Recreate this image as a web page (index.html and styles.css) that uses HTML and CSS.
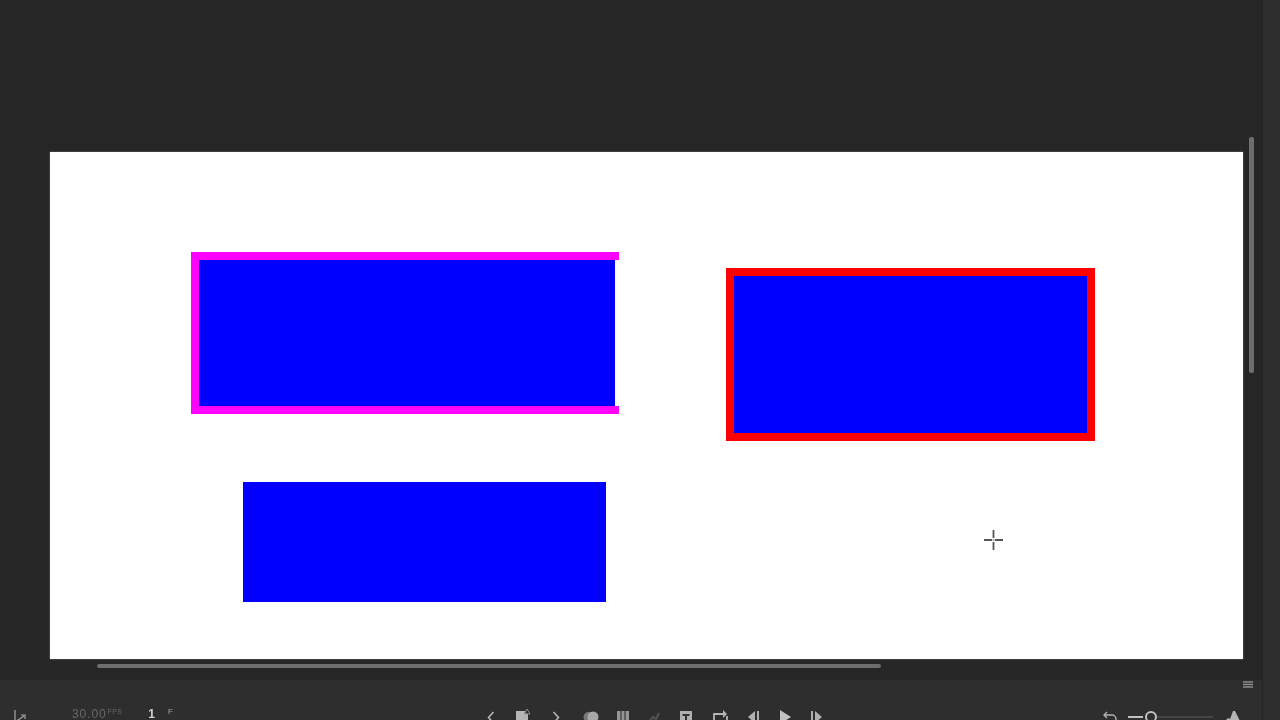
FILE: index.html
```html
<!DOCTYPE html>
<html>
<head>
    <meta charset="UTF-8">
    <title>Composition Viewer</title>
    <link rel="stylesheet" href="styles.css">
</head>
<body>
    <div class="app">
        <div class="main-column">
            <!-- Composition viewer -->
            <main class="viewer">
                <div class="artboard">
                    <div class="shape shape-magenta"><div class="shape-fill"></div></div>
                    <div class="shape shape-red"></div>
                    <div class="shape shape-blue"></div>
                    <svg class="cursor" width="19" height="20" viewBox="0 0 19 20">
                        <path d="M9.500 0v8M9.500 12v8M0 10h8M11 10h8" stroke="#555" stroke-width="1.800" fill="none"/>
                        <path d="M8.500 9h2v2h-2z" fill="#aaa"/>
                    </svg>
                </div>
                <div class="scroll-v"></div>
                <div class="scroll-h"></div>
            </main>

            <!-- Playback bar, cut off by the bottom of the window -->
            <footer class="playbar">
                <div class="menu-row">
                    <svg width="10" height="8" viewBox="0 0 10 8"><path d="M0 1h10M0 3.500h10M0 6h10" stroke="#8a8a8a" stroke-width="1.300"/></svg>
                </div>
                <div class="controls">
                    <div class="group-left">
                        <svg class="axis-icon" width="13" height="16" viewBox="0 0 13 16"><path d="M1 1v14M1 13l9-6M7 6h4v4" stroke="#a5a5a5" stroke-width="1.200" fill="none"/></svg>
                        <span class="fps">30.00<sup>FPS</sup></span>
                        <span class="frame">1</span>
                        <span class="frame-unit">F</span>
                    </div>
                    <div class="group-center">
                        <span class="btn"><svg width="10" height="14" viewBox="0 0 10 14"><path d="M7.500 2L2.500 7.500l5 5.500" stroke="#b5b5b5" stroke-width="1.600" fill="none"/></svg></span>
                        <span class="btn btn-tall"><svg width="15" height="16" viewBox="0 0 15 16"><path d="M0 3h9v2l3 1v10H0z" fill="#b5b5b5"/><path d="M11 1l3 5H8z" fill="none" stroke="#8c8c8c"/></svg></span>
                        <span class="btn"><svg width="10" height="14" viewBox="0 0 10 14"><path d="M2.500 2l5 5.500-5 5.500" stroke="#b5b5b5" stroke-width="1.600" fill="none"/></svg></span>
                        <span class="btn btn-nudge"><svg width="16" height="14" viewBox="0 0 16 14"><circle cx="5.500" cy="7" r="5" fill="#777"/><circle cx="10" cy="7" r="5.500" fill="#a8a8a8"/></svg></span>
                        <span class="btn btn-nudge"><svg width="14" height="14" viewBox="0 0 14 14"><path d="M1 1h12v13H1z" fill="#969696"/><path d="M5 1v10M9 1v10" stroke="#3a3a3a" stroke-width="1.200"/></svg></span>
                        <span class="btn"><svg width="14" height="14" viewBox="0 0 14 14"><path d="M1 13l5-6 3 2 3-6" stroke="#505050" stroke-width="2.400" fill="none"/></svg></span>
                        <span class="btn"><svg width="14" height="14" viewBox="0 0 14 14"><path d="M1 1h12v13H1z" fill="#b0b0b0"/><path d="M3.500 4h7v2h-2.500v6h-2V6h-2.500z" fill="#333"/></svg></span>
                        <span class="btn btn-nudge"><svg width="17" height="14" viewBox="0 0 17 14"><path d="M2 13V4h10M2 11v2h13V6" stroke="#b5b5b5" stroke-width="1.800" fill="none"/><path d="M11 0l4 4-4 4z" fill="#b5b5b5"/></svg></span>
                        <span class="btn btn-nudge"><svg width="13" height="14" viewBox="0 0 13 14"><path d="M8 1v12L1 7z" fill="#b0b0b0"/><path d="M10 1h2v13h-2z" fill="#b0b0b0"/></svg></span>
                        <span class="btn btn-nudge"><svg width="13" height="14" viewBox="0 0 13 14"><path d="M1 0l11 7-11 7z" fill="#c2c2c2"/></svg></span>
                        <span class="btn"><svg width="13" height="14" viewBox="0 0 13 14"><path d="M1 1h2v13H1z" fill="#b0b0b0"/><path d="M5 1v12l7-6z" fill="#b0b0b0"/></svg></span>
                    </div>
                    <div class="group-right">
                        <svg width="15" height="12" viewBox="0 0 15 12"><path d="M4 1L1 4l3 3M1 4h8a4 4 0 0 1 4 4v3M2 10h9" stroke="#b0b0b0" stroke-width="1.400" fill="none"/></svg>
                        <div class="zoom-slider">
                            <span class="zoom-minus"></span>
                            <span class="zoom-knob"></span>
                            <span class="zoom-track"></span>
                        </div>
                        <svg width="18" height="12" viewBox="0 0 18 12"><path d="M0 12l5-5 2 1 3-8h2l6 12z" fill="#b5b5b5"/></svg>
                    </div>
                </div>
            </footer>
        </div>
        <aside class="side-panel"></aside>
    </div>
</body>
</html>
```

FILE: styles.css
```css
html,
body {
    margin: 0;
    padding: 0;
    height: 100%;
    overflow: hidden;
    background-color: #262626;
    font-family: "Liberation Sans", Arial, sans-serif;
}

.app {
    display: flex;
    height: 720px;
    overflow: hidden;
}

.main-column {
    display: flex;
    flex-direction: column;
    flex: 1;
}

.viewer {
    position: relative;
    height: 680px;
    flex-shrink: 0;
    padding: 152px 0 0 50px;
    box-sizing: border-box;
    background-color: #262626;
}

.side-panel {
    width: 18px;
    background-color: #2d2d2d;
    border-left: 1px solid #242424;
    box-sizing: border-box;
}

.artboard {
    position: relative;
    width: 1193px;
    height: 507px;
    background-color: #fff;
    box-shadow: 0 0 2px rgba(255, 255, 255, 0.35);
}

/* shapes sit on a free canvas */
.shape {
    position: absolute;
    box-sizing: border-box;
    filter: blur(0.4px);
}

.shape-magenta {
    left: 141px;
    top: 100px;
    width: 428px;
    height: 162px;
    border-top: 8px solid #ff00ff;
    border-bottom: 8px solid #ff00ff;
    border-left: 8px solid #ff00ff;
}

.shape-fill {
    width: 416px;
    height: 100%;
    background-color: #0000ff;
}

.shape-red {
    left: 676px;
    top: 116px;
    width: 369px;
    height: 173px;
    background-color: #0000ff;
    border: 8px solid #ff0000;
}

.shape-blue {
    left: 193px;
    top: 330px;
    width: 363px;
    height: 120px;
    background-color: #0000ff;
}

.cursor {
    position: absolute;
    left: 934px;
    top: 378px;
}

.scroll-v {
    position: absolute;
    left: 1249px;
    top: 137px;
    width: 5px;
    height: 236px;
    border-radius: 2px;
    background-color: #6e6e6e;
}

.scroll-h {
    position: absolute;
    left: 97px;
    top: 664px;
    width: 784px;
    height: 4px;
    border-radius: 2px;
    background-color: #6e6e6e;
}

.playbar {
    flex: 1;
    background-color: #2e2e2e;
    padding: 1px 9px 0 14px;
    filter: blur(0.5px);
}

.menu-row {
    display: flex;
    justify-content: flex-end;
    height: 8px;
}

.menu-row svg {
    display: block;
}

.controls {
    position: relative;
    display: flex;
    justify-content: space-between;
    margin-top: 17px;
    margin-right: 12px;
    height: 14px;
}

.group-left {
    display: flex;
    align-items: flex-start;
    color: #8a8a8a;
}

.axis-icon {
    margin-top: 3px;
}

.fps {
    margin-left: 45px;
    margin-top: 3px;
    font-size: 12px;
    line-height: 11px;
    letter-spacing: 0.9px;
    color: #686868;
}

.fps sup {
    font-size: 7px;
    letter-spacing: 0.4px;
    margin-left: 1px;
    vertical-align: 4px;
    line-height: 0;
}

.frame {
    margin-left: 26px;
    margin-top: 3px;
    font-size: 12px;
    line-height: 11px;
    font-weight: bold;
    color: #d0d0d0;
}

.frame-unit {
    margin-left: 13px;
    margin-top: 2px;
    font-size: 8px;
    line-height: 8px;
    color: #a8a8a8;
}

.group-center {
    position: absolute;
    left: 461px;
    top: 4px;
    display: flex;
}

.btn {
    display: flex;
    justify-content: center;
    width: 32.5px;
}

.btn-tall {
    margin-top: -2px;
}

.btn-nudge {
    margin-left: 2px;
    margin-right: -2px;
}

.group-right {
    display: flex;
    align-items: flex-start;
    gap: 10px;
    margin-top: 5px;
}

.zoom-slider {
    display: flex;
    align-items: center;
    width: 85px;
    height: 12px;
}

.zoom-minus {
    width: 15px;
    height: 2px;
    background-color: #c0c0c0;
}

.zoom-knob {
    width: 8px;
    height: 8px;
    margin-left: 2px;
    border: 2px solid #c0c0c0;
    border-radius: 50%;
}

.zoom-track {
    flex: 1;
    height: 2px;
    background-color: #444;
}
```
